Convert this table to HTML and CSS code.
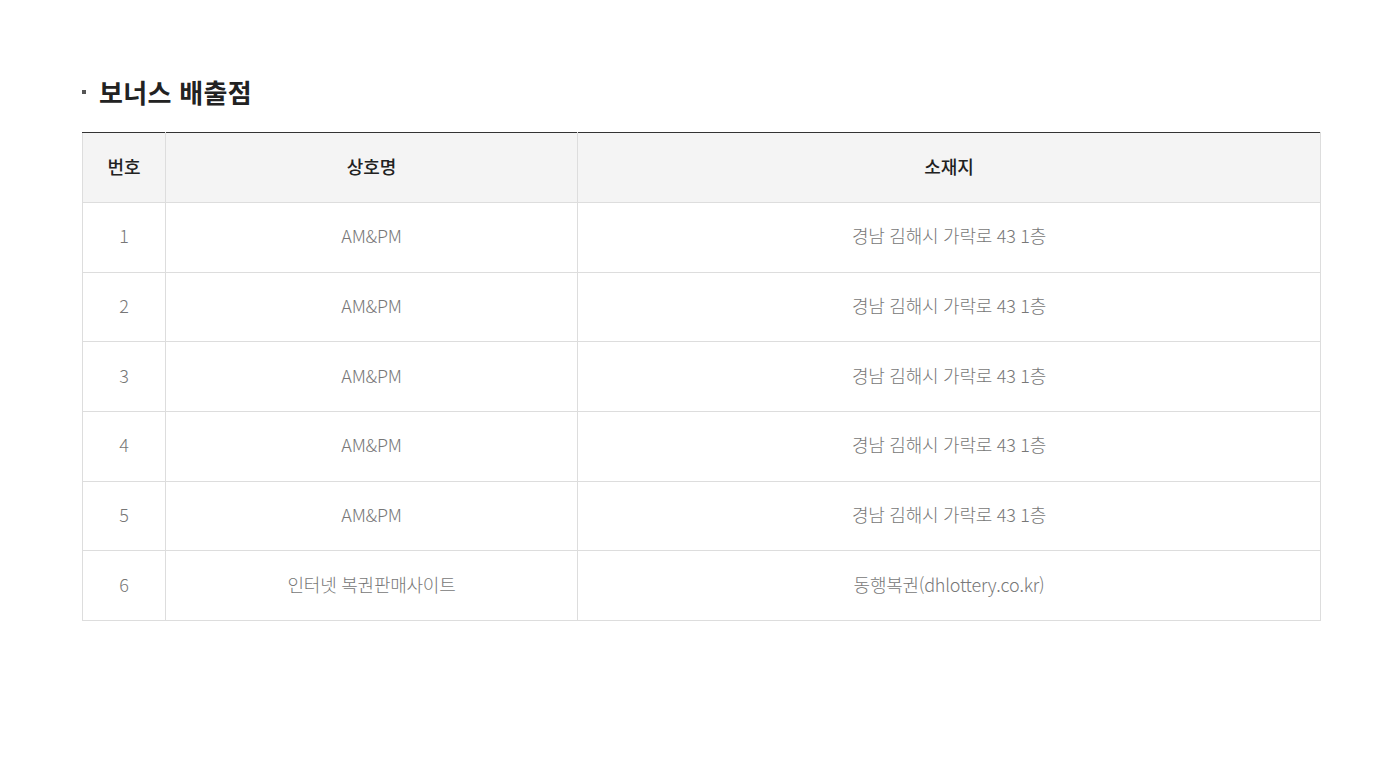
FILE: index.html
```html
<!DOCTYPE html>
<html lang="ko">
<head>
<meta charset="utf-8">
<link rel="stylesheet" href="styles.css">
</head>
<body>
<div class="wrap">
  <h3 class="title">보너스 배출점</h3>
  <table class="tbl">
    <colgroup>
      <col class="c1"><col class="c2"><col class="c3">
    </colgroup>
    <thead>
      <tr><th>번호</th><th>상호명</th><th>소재지</th></tr>
    </thead>
    <tbody>
      <tr><td>1</td><td>AM&amp;PM</td><td>경남 김해시 가락로 43 1층</td></tr>
      <tr><td>2</td><td>AM&amp;PM</td><td>경남 김해시 가락로 43 1층</td></tr>
      <tr><td>3</td><td>AM&amp;PM</td><td>경남 김해시 가락로 43 1층</td></tr>
      <tr><td>4</td><td>AM&amp;PM</td><td>경남 김해시 가락로 43 1층</td></tr>
      <tr><td>5</td><td>AM&amp;PM</td><td>경남 김해시 가락로 43 1층</td></tr>
      <tr><td>6</td><td>인터넷 복권판매사이트</td><td>동행복권(dhlottery.co.kr)</td></tr>
    </tbody>
  </table>
</div>
</body>
</html>
```
FILE: styles.css
```css
html, body { margin: 0; padding: 0; background: #fff; }
body { font-family: "Noto Sans CJK KR", "Noto Sans", sans-serif; }
.wrap { padding: 73px 66px 0 82px; }
.title {
  position: relative;
  margin: 0 0 21px 0;
  padding-left: 17px;
  font-size: 26px;
  font-weight: 700;
  color: #222;
  line-height: 38px;
  letter-spacing: 0.3px;
}
.title::before {
  content: "";
  position: absolute;
  left: 0;
  top: 17px;
  width: 4px;
  height: 4px;
  background: #555;
}
.tbl {
  width: 1238px;
  border-collapse: collapse;
  table-layout: fixed;
}
.c1 { width: 83px; }
.c2 { width: 412px; }
.c3 { width: 743px; }
.tbl th, .tbl td {
  border: 1px solid #ddd;
  text-align: center;
  padding: 0 0 4px 0;
  font-size: 18px;
  letter-spacing: -0.25px;
}
.tbl th { height: 65px; }
.tbl td { height: 64.67px; }
.tbl thead tr th { border-top: 1px solid #333; }
.tbl th {
  background: #f4f4f4;
  color: #222;
  font-weight: 500;
  letter-spacing: 0;
}
.tbl td {
  color: #777;
  font-weight: 300;
}
```
